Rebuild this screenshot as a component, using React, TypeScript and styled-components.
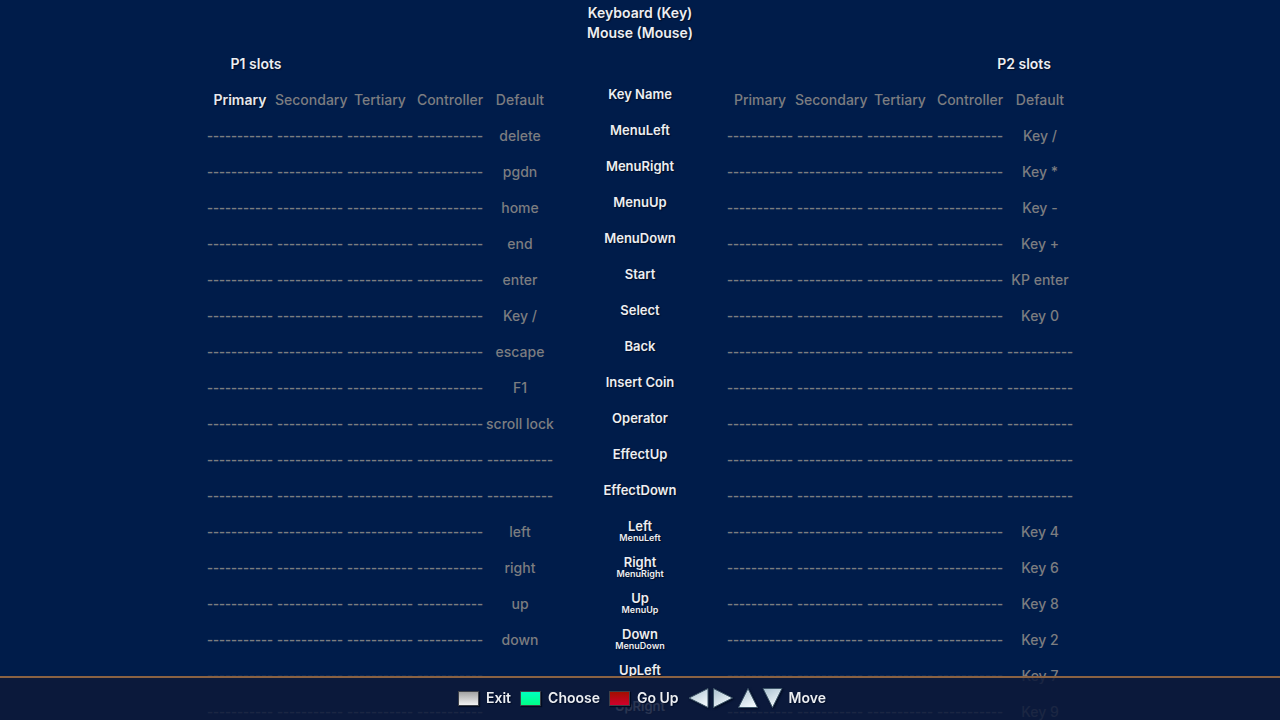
import React from "react";
import styled, { createGlobalStyle } from "styled-components";

const GlobalStyle = createGlobalStyle`
  * { box-sizing: border-box; }
  body {
    margin: 0;
    background: #001c4a;
    color: #eceef2;
    font-family: Inter, "Noto Sans", "Liberation Sans", sans-serif;
    font-size: 14px;
    font-weight: 500;
    line-height: 20px;
    text-shadow: 1px 1px 1px #000c24;
  }
`;

const Page = styled.main`
  height: 100vh;
  overflow: hidden;
`;

const Devices = styled.h1`
  margin: 0;
  padding-top: 3px;
  font-size: 14px;
  font-weight: 600;
  text-align: center;
`;

const Device = styled.span`
  display: block;
`;

const SlotTitles = styled.div`
  display: grid;
  grid-template-columns: 2fr 1fr 2fr;
  margin: 11px 0 8px;
`;

const SlotTitle = styled.h2<{ $column: number }>`
  grid-column: ${(p) => p.$column};
  margin: 0;
  font-size: 14px;
  font-weight: 600;
  text-align: center;
`;

const Mapping = styled.table`
  margin: 0 auto;
  border-collapse: collapse;
  table-layout: fixed;
  width: 870px;
`;

const SlotColumn = styled.col`
  width: 70px;
`;

const Row = styled.tr`
  height: 36px;
`;

const SlotHeading = styled.th<{ $active?: boolean }>`
  padding: 0;
  font-weight: ${(p) => (p.$active ? 600 : 500)};
  white-space: nowrap;
  color: ${(p) => (p.$active ? "#e6e8ee" : "#7c7d80")};
  text-shadow: ${(p) => (p.$active ? "inherit" : "none")};
`;

const Slot = styled.td`
  padding: 0;
  color: #7c7d80;
  text-align: center;
  text-shadow: none;
  white-space: nowrap;
`;

const Empty = styled.span`
  display: block;
  font-family: "Liberation Sans", Arial, sans-serif;
  font-size: 18px;
  font-weight: 400;
  line-height: 16px;
`;

const KeyName = styled.th`
  padding: 4px 0 0;
  vertical-align: top;
  font-size: 13px;
  font-weight: 600;
  line-height: 16px;
`;

const MenuAlias = styled.small`
  display: block;
  font-size: 9px;
  line-height: 8px;
`;

const HelpBar = styled.footer`
  position: fixed;
  inset: auto 0 0;
  display: flex;
  justify-content: center;
  align-items: center;
  gap: 9px;
  height: 44px;
  padding: 0 0 2px 4px;
  border-top: 2px solid #8a6243;
  background: rgba(13, 25, 58, 0.87);
  font-weight: 600;
`;

const HelpButton = styled.button`
  display: flex;
  align-items: center;
  gap: 7px;
  padding: 0;
  border: 0;
  background: none;
  color: inherit;
  font: inherit;
  text-shadow: inherit;
`;

const Swatch = styled.span<{ $from: string; $to: string }>`
  width: 21px;
  height: 15px;
  border: 1px solid #3d4048;
  background: linear-gradient(${(p) => p.$from}, ${(p) => p.$to});
  box-shadow: 1px 1px 1px #000a20;
`;

const MoveHint = styled.div`
  display: flex;
  align-items: center;
  gap: 6px;
`;

const Arrows = styled.svg`
  display: block;
  width: 95px;
  height: 24px;
  filter: drop-shadow(1px 1px 1px #000a20);
`;

const slotNames = ["Primary", "Secondary", "Tertiary", "Controller", "Default"];
const assignable = slotNames.slice(0, 4);
const emptySlot = "-----------";

interface Binding {
  name: string;
  alias?: string;
  p1?: string;
  p2?: string;
}

const bindings: Binding[] = [
  { name: "MenuLeft", p1: "delete", p2: "Key /" },
  { name: "MenuRight", p1: "pgdn", p2: "Key *" },
  { name: "MenuUp", p1: "home", p2: "Key -" },
  { name: "MenuDown", p1: "end", p2: "Key +" },
  { name: "Start", p1: "enter", p2: "KP enter" },
  { name: "Select", p1: "Key /", p2: "Key 0" },
  { name: "Back", p1: "escape" },
  { name: "Insert Coin", p1: "F1" },
  { name: "Operator", p1: "scroll lock" },
  { name: "EffectUp" },
  { name: "EffectDown" },
  { name: "Left", alias: "MenuLeft", p1: "left", p2: "Key 4" },
  { name: "Right", alias: "MenuRight", p1: "right", p2: "Key 6" },
  { name: "Up", alias: "MenuUp", p1: "up", p2: "Key 8" },
  { name: "Down", alias: "MenuDown", p1: "down", p2: "Key 2" },
  { name: "UpLeft", p1: "", p2: "Key 7" },
  { name: "UpRight", p1: "", p2: "Key 9" },
];

function PlayerSlots({ value }: { value?: string }) {
  return (
    <>
      {assignable.map((slot) => (
        <Slot key={slot}>
          <Empty>{emptySlot}</Empty>
        </Slot>
      ))}
      <Slot>{value ?? <Empty>{emptySlot}</Empty>}</Slot>
    </>
  );
}

export default function App() {
  return (
    <>
      <GlobalStyle />
      <Page>
        <Devices>
          <Device>Keyboard (Key)</Device>
          <Device>Mouse (Mouse)</Device>
        </Devices>
        <SlotTitles>
          <SlotTitle $column={1}>P1 slots</SlotTitle>
          <SlotTitle $column={3}>P2 slots</SlotTitle>
        </SlotTitles>
        <Mapping>
          <colgroup>
            <SlotColumn span={5} />
            <col />
            <SlotColumn span={5} />
          </colgroup>
          <thead>
            <Row>
              {slotNames.map((name, i) => (
                <SlotHeading key={name} scope="col" $active={i === 0}>
                  {name}
                </SlotHeading>
              ))}
              <KeyName scope="col">Key Name</KeyName>
              {slotNames.map((name) => (
                <SlotHeading key={name} scope="col">
                  {name}
                </SlotHeading>
              ))}
            </Row>
          </thead>
          <tbody>
            {bindings.map(({ name, alias, p1, p2 }) => (
              <Row key={name}>
                <PlayerSlots value={p1} />
                <KeyName scope="row">
                  {name}
                  {alias && <MenuAlias>{alias}</MenuAlias>}
                </KeyName>
                <PlayerSlots value={p2} />
              </Row>
            ))}
          </tbody>
        </Mapping>
      </Page>
      <HelpBar>
        <HelpButton type="button">
          <Swatch $from="#a3a3a3" $to="#f2f2f2" />
          Exit
        </HelpButton>
        <HelpButton type="button">
          <Swatch $from="#00ffc0" $to="#00ff86" />
          Choose
        </HelpButton>
        <HelpButton type="button">
          <Swatch $from="#a31000" $to="#d0002c" />
          Go Up
        </HelpButton>
        <MoveHint>
          <Arrows viewBox="0 0 95 24" aria-hidden="true">
            <defs>
              <linearGradient id="steel" x1="0" y1="0" x2="0.6" y2="1">
                <stop offset="0" stopColor="#a9c0d0" />
                <stop offset="1" stopColor="#f1f8fb" />
              </linearGradient>
            </defs>
            <g fill="url(#steel)" stroke="#3d5568" strokeWidth="1">
              <path d="M1 12 20 2.500V21.500Z" />
              <path d="M25.500 2.500V21.500L44.500 12Z" />
              <path d="M60 2.500 50.500 21.500H69.500Z" />
              <path d="M75 2.500H94L84.500 21.500Z" />
            </g>
          </Arrows>
          Move
        </MoveHint>
      </HelpBar>
    </>
  );
}
